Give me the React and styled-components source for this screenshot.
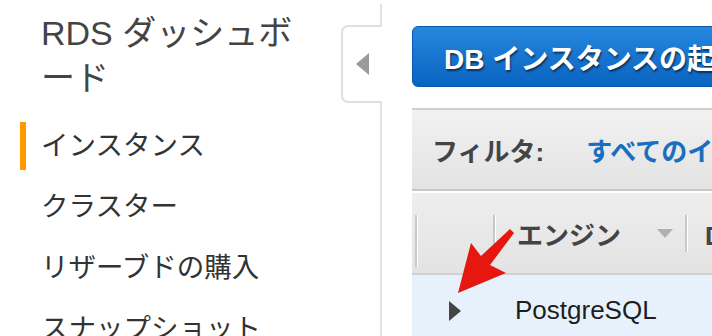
import React from "react";
import styled, { createGlobalStyle } from "styled-components";

const GlobalStyle = createGlobalStyle`
  html, body {
    margin: 0;
    padding: 0;
    background: #fff;
  }
  body {
    font-family: "Liberation Sans", "Noto Sans CJK JP", sans-serif;
    overflow: hidden;
  }
`;

const Page = styled.div`
  position: relative;
  width: 712px;
  height: 336px;
  display: flex;
  overflow: hidden;
`;

const Sidebar = styled.aside`
  flex: 0 0 380px;
  display: flex;
  align-items: flex-start;
  border-right: 2px solid #e2e2e2;
  margin-top: 4px;
`;

const Nav = styled.nav`
  flex: 0 0 300px;
  padding-left: 20px;
  box-sizing: border-box;
`;

const Title = styled.h1`
  margin: 0 0 21px;
  padding: 7px 0 0 21px;
  font-size: 34px;
  line-height: 45px;
  font-weight: normal;
  color: #444;
`;

const NavItem = styled.div`
  border-left: 6px solid ${(p) => (p.$active ? "#ff9900" : "transparent")};
  padding-left: 15px;
  height: 48px;
  line-height: 48px;
  margin-bottom: 13px;
  font-size: 27.5px;
  color: #333;
  white-space: nowrap;
`;

const CollapseTab = styled.div`
  position: relative;
  z-index: 1;
  margin: 21px -2px 0 auto;
  width: 39px;
  height: 74px;
  background: #fff;
  border: 2px solid #e0e0e0;
  border-right: none;
  border-radius: 7px 0 0 7px;
  display: flex;
  align-items: center;
  justify-content: center;
`;

const Main = styled.main`
  flex: 1;
  min-width: 0;
  padding: 26px 0 0 30px;
  overflow: hidden;
`;

const LaunchButton = styled.div`
  height: 59px;
  width: 420px;
  box-sizing: content-box;
  border: 1px solid #0b58ad;
  border-radius: 6px;
  background: linear-gradient(#2687dd, #0a63c1);
  display: flex;
  align-items: center;
  padding-left: 31px;
  font-size: 28px;
  font-weight: bold;
  color: #fff;
  white-space: nowrap;
  text-shadow: 1px 2px 2px rgba(0, 0, 0, 0.55);
`;

const FilterBar = styled.div`
  margin-top: 21px;
  height: 79px;
  width: 400px;
  border-top: 2px solid #d0d0d0;
  border-bottom: 2px solid #c6c6c6;
  background: linear-gradient(#f1f1f1, #e3e3e3);
  display: flex;
  align-items: center;
  padding-left: 20px;
  font-size: 26px;
  font-weight: bold;
  white-space: nowrap;
`;

const FilterLabel = styled.span`
  color: #444;
  margin-right: 42px;
`;

const FilterValue = styled.span`
  color: #1a6ebf;
`;

const HeaderRow = styled.div`
  margin-top: 2px;
  width: 400px;
  border-bottom: 2px solid #d0d0d0;
  background: linear-gradient(#eeeeee, #e3e3e3);
  display: flex;
  align-items: flex-start;
  padding-top: 22px;
  box-sizing: border-box;
  height: 82px;
  white-space: nowrap;
`;

const Divider = styled.span`
  flex: 0 0 auto;
  width: 2px;
  height: ${(p) => p.$h}px;
  background: #c9c9c9;
  border-right: 1px solid #fff;
`;

const HeadCell = styled.div`
  flex: 0 0 ${(p) => p.$w}px;
  box-sizing: border-box;
  display: flex;
  align-items: center;
  height: 37px;
  padding-left: ${(p) => p.$pl || 0}px;
  font-size: 26px;
  font-weight: bold;
  color: #444;
`;

const SortCaret = styled.span`
  margin-left: auto;
  margin-right: 12px;
  width: 0;
  height: 0;
  border-left: 8px solid transparent;
  border-right: 8px solid transparent;
  border-top: 9px solid #b0b0b0;
`;

const DataRow = styled.div`
  height: 70px;
  width: 400px;
  background: #e7f1fb;
  display: flex;
  align-items: center;
  font-size: 26px;
  color: #1e1e1e;
  white-space: nowrap;
`;

const ExpandCell = styled.div`
  flex: 0 0 103px;
  display: flex;
  justify-content: flex-end;
  padding-right: 54px;
  box-sizing: border-box;
`;

const ExpandArrow = styled.span`
  width: 0;
  height: 0;
  border-top: 10px solid transparent;
  border-bottom: 10px solid transparent;
  border-left: 12px solid #444;
  margin-top: 2px;
`;

const Overlay = styled.svg`
  position: absolute;
  left: 0;
  top: 0;
  pointer-events: none;
`;

const navItems = ["インスタンス", "クラスター", "リザーブドの購入", "スナップショット"];

export default function App() {
  return (
    <>
      <GlobalStyle />
      <Page>
        <Sidebar>
          <Nav>
            <Title>RDS ダッシュボード</Title>
            {navItems.map((label, i) => (
              <NavItem key={label} $active={i === 0}>
                {label}
              </NavItem>
            ))}
          </Nav>
          <CollapseTab>
            <svg width="14" height="22" viewBox="0 0 14 22">
              <polygon points="13,0 13,22 0,11" fill="#9a9a9a" />
            </svg>
          </CollapseTab>
        </Sidebar>
        <Main>
          <LaunchButton>DB インスタンスの起動</LaunchButton>
          <FilterBar>
            <FilterLabel>フィルタ:</FilterLabel>
            <FilterValue>すべてのインスタンス</FilterValue>
          </FilterBar>
          <HeaderRow>
            <HeadCell $w={3} />
            <Divider $h={52} />
            <HeadCell $w={75} />
            <Divider $h={37} />
            <HeadCell $w={189} $pl={21}>
              エンジン
              <SortCaret />
            </HeadCell>
            <Divider $h={37} />
            <HeadCell $w={120} $pl={17}>
              DB インスタンス
            </HeadCell>
          </HeaderRow>
          <DataRow>
            <ExpandCell>
              <ExpandArrow />
            </ExpandCell>
            PostgreSQL
          </DataRow>
        </Main>
        <Overlay width="712" height="336" viewBox="0 0 712 336">
          <polygon
            points="458,293 471,243 481,256 510,229 514,233 490,265 506,273"
            fill="#e5170e"
          />
        </Overlay>
      </Page>
    </>
  );
}
